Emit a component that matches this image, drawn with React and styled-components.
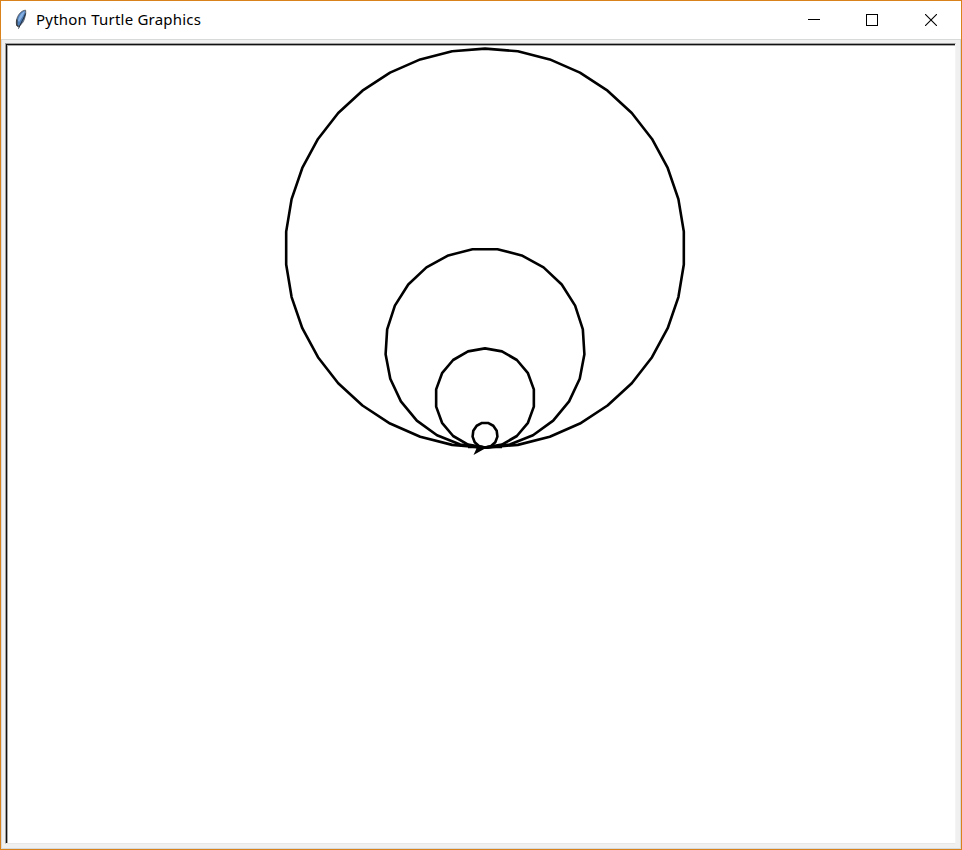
import React from "react";
import styled, { createGlobalStyle } from "styled-components";

const GlobalStyle = createGlobalStyle`
  * { box-sizing: border-box; }
  html, body { margin: 0; padding: 0; overflow: hidden; }
`;

const Window = styled.div`
  width: 962px;
  height: 850px;
  display: flex;
  flex-direction: column;
  border: 1px solid #d9821c;
  background: #f0f0f0;
`;

const TitleBar = styled.header`
  height: 39px;
  flex: none;
  display: flex;
  align-items: center;
  padding-left: 13px;
  background: #fff;
  border-bottom: 1px solid #d8dada;
`;

const Title = styled.h1`
  margin: 0 auto 0 8px;
  padding-bottom: 2px;
  font: 400 15px/22px "Noto Sans", "Open Sans", sans-serif;
  letter-spacing: 0.22px;
  white-space: nowrap;
  color: #000;
`;

const Controls = styled.div`
  display: flex;
  height: 100%;
`;

const ControlButton = styled.button`
  width: ${(p) => p.$width}px;
  height: 38px;
  padding: 0;
  border: 0;
  background: transparent;
  display: flex;
  align-items: center;
  justify-content: center;
`;

const Body = styled.main`
  flex: 1;
  min-height: 0;
  display: flex;
  padding: 3px 4px 4px 3px;
  border: solid #d6d9dc;
  border-width: 0 1px 1px;
`;

const CanvasFrame = styled.div`
  flex: 1;
  display: flex;
  border: 1px solid;
  border-color: #a0a0a0 #f4f4f4 #e8e8e8 #a0a0a0;
`;

const Canvas = styled.div`
  flex: 1;
  min-width: 0;
  overflow: hidden;
  background: #fff;
  border: solid #101010;
  border-width: 1px 0 0 1px;
  box-shadow: inset 1px 1px 0 #a9a9a9;
`;

const Drawing = styled.svg`
  display: block;
`;

const circles = [
  { r: 199.5, steps: 38 },
  { r: 99.6, steps: 25 },
  { r: 49.6, steps: 18 },
  { r: 12.5, steps: 13 },
];

const ORIGIN = { x: 485, y: 447.6 };

function polygonPoints({ r, steps }) {
  return Array.from({ length: steps }, (_, i) => {
    const a = (2 * Math.PI * i) / steps;
    const x = ORIGIN.x + r * Math.sin(a);
    const y = ORIGIN.y - r + r * Math.cos(a);
    return `${x.toFixed(2)},${y.toFixed(2)}`;
  }).join(" ");
}

function FeatherIcon() {
  return (
    <svg width="14" height="22" viewBox="0 0 14 22">
      <path d="M11.6 1.2C7.5 1.4 4.6 5 3.1 9c-.9 2.6-1 5.3-.4 7.4l1.5 1.2c3.2-1.8 5.2-4.2 6.2-7.5.8-2.7 1.7-6 1.2-8.9z" fill="#4f7fb8" stroke="#4c5057" strokeWidth=".8" />
      <path d="M10.8 2.2C7.7 3 5 7.1 4 11.8l1.1 1.1C7.4 9.4 9.7 6.2 10.8 2.2z" fill="#87b1e2" />
      <path d="M11.6 4.5C10 9 7.4 12.8 4.5 19.6" fill="none" stroke="#202b3b" strokeWidth="1" />
      <path d="M2.9 10.5v5.8l1.6 1.2" fill="none" stroke="#333" strokeWidth="1.2" />
    </svg>
  );
}

export default function App() {
  return (
    <>
      <GlobalStyle />
      <Window>
        <TitleBar>
          <FeatherIcon />
          <Title>Python Turtle Graphics</Title>
          <Controls>
            <ControlButton $width={58} aria-label="Minimize">
              <svg width="12" height="12" shapeRendering="crispEdges">
                <path d="M0 5.5h12" stroke="#000" />
              </svg>
            </ControlButton>
            <ControlButton $width={58} aria-label="Maximize">
              <svg width="12" height="12">
                <rect x=".5" y=".5" width="11" height="11" fill="none" stroke="#000" />
              </svg>
            </ControlButton>
            <ControlButton $width={60} aria-label="Close">
              <svg width="12" height="12">
                <path d="M0 0l12 12M12 0L0 12" stroke="#000" strokeWidth="1.1" />
              </svg>
            </ControlButton>
          </Controls>
        </TitleBar>
        <Body>
          <CanvasFrame>
            <Canvas>
              <Drawing width="948" height="798" viewBox="7 45 948 798">
                <g fill="none" stroke="#000" strokeWidth="2.6" strokeLinejoin="round">
                  {circles.map((c) => (
                    <polygon key={c.r} points={polygonPoints(c)} />
                  ))}
                  <path d="M468 447.2H502" strokeWidth="2.2" />
                </g>
                <path d="M486 448L473.5 455L476.5 448.5L474 446.5Z" fill="#000" />
              </Drawing>
            </Canvas>
          </CanvasFrame>
        </Body>
      </Window>
    </>
  );
}
